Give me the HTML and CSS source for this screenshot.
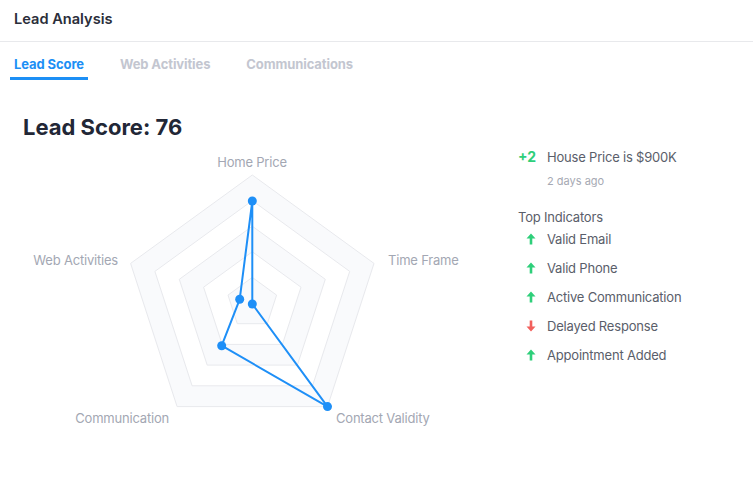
FILE: index.html
```html
<!DOCTYPE html>
<html lang="en">
<head>
	<meta charset="UTF-8">
	<title>Lead Analysis</title>
	<link rel="stylesheet" href="styles.css">
</head>
<body>
	<div class="header">Lead Analysis</div>
	<ul class="tabs">
		<li class="tab active">Lead Score</li>
		<li class="tab">Web Activities</li>
		<li class="tab">Communications</li>
	</ul>
	<h2 class="score-title">Lead Score: 76</h2>
	<div class="panel">
		<svg class="radar" width="500" height="290" viewBox="0 0 500 290">
			<!-- rings -->
			<polygon class="ring band" points="252.3,30 374,118.4 327.5,261.6 177.1,261.6 130.6,118.4"/>
			<polygon class="ring" points="252.3,55.6 349.7,126.4 312.5,240.8 192.1,240.8 154.9,126.4"/>
			<polygon class="ring band" points="252.3,81.2 325.3,134.3 297.4,220.1 207.2,220.1 179.3,134.3"/>
			<polygon class="ring" points="252.3,106.8 301,142.2 282.4,199.4 222.2,199.4 203.6,142.2"/>
			<polygon class="ring band" points="252.3,132.4 276.6,150.1 267.3,178.7 237.3,178.7 228,150.1"/>
			<!-- labels -->
			<text class="axis-label" x="252" y="22" text-anchor="middle">Home Price</text>
			<text class="axis-label" x="388" y="120">Time Frame</text>
			<text class="axis-label" x="336" y="278">Contact Validity</text>
			<text class="axis-label" x="169" y="278" text-anchor="end">Communication</text>
			<text class="axis-label" x="118" y="120" text-anchor="end">Web Activities</text>
			<!-- data -->
			<polygon class="data" points="252.3,56 252.3,159 327.5,261.6 221.7,200.7 239.7,154.3"/>
			<circle class="dot" cx="252.3" cy="56" r="4.5"/>
			<circle class="dot" cx="252.3" cy="159" r="4.5"/>
			<circle class="dot" cx="327.5" cy="261.6" r="4.5"/>
			<circle class="dot" cx="221.7" cy="200.7" r="4.5"/>
			<circle class="dot" cx="239.7" cy="154.3" r="4.5"/>
		</svg>
		<div class="side">
			<div class="event">
				<span class="delta">+2</span>
				<span>House Price is $900K</span>
			</div>
			<div class="event-time">2 days ago</div>
			<div class="side-title">Top Indicators</div>
			<ul class="indicators">
				<li><span class="ico up"><svg width="10" height="12" viewBox="0 0 10 12"><path d="M5 0.5 L9.5 5.5 L6.3 5.5 L6.3 11.5 L3.7 11.5 L3.7 5.5 L0.5 5.5 Z"/></svg></span>Valid Email</li>
				<li><span class="ico up"><svg width="10" height="12" viewBox="0 0 10 12"><path d="M5 0.5 L9.5 5.5 L6.3 5.5 L6.3 11.5 L3.7 11.5 L3.7 5.5 L0.5 5.5 Z"/></svg></span>Valid Phone</li>
				<li><span class="ico up"><svg width="10" height="12" viewBox="0 0 10 12"><path d="M5 0.5 L9.5 5.5 L6.3 5.5 L6.3 11.5 L3.7 11.5 L3.7 5.5 L0.5 5.5 Z"/></svg></span>Active Communication</li>
				<li><span class="ico down"><svg width="10" height="12" viewBox="0 0 10 12"><path d="M5 11.5 L9.5 6.5 L6.3 6.5 L6.3 0.5 L3.7 0.5 L3.7 6.5 L0.5 6.5 Z"/></svg></span>Delayed Response</li>
				<li><span class="ico up"><svg width="10" height="12" viewBox="0 0 10 12"><path d="M5 0.5 L9.5 5.5 L6.3 5.5 L6.3 11.5 L3.7 11.5 L3.7 5.5 L0.5 5.5 Z"/></svg></span>Appointment Added</li>
			</ul>
		</div>
	</div>
</body>
</html>
```

FILE: styles.css
```css
*{margin:0;padding:0;}
body{
	font-family: Inter, "Noto Sans", sans-serif;
	background: #fff;
	color: #5a5e6a;
}
.header{
	height: 41px;
	line-height: 38px;
	padding-left: 14px;
	border-bottom: 1px solid #e8e9ec;
	font-size: 14.6px;
	font-weight: 600;
	color: #2b2e3a;
}
.tabs{
	display: flex;
	gap: 28px;
	padding: 12px 0 0 10px;
	list-style: none;
}
.tab{
	padding: 0 4px 3px;
	line-height: 20px;
	font-size: 13px;
	font-weight: 700;
	letter-spacing: -0.1px;
	color: #c3c6d0;
	border-bottom: 3px solid transparent;
}
.tab.active{
	color: #1d8ff5;
	border-bottom-color: #1d8ff5;
}
.score-title{
	margin-top: 33px;
	padding-left: 23px;
	line-height: 28px;
	font-size: 22px;
	font-weight: 700;
	color: #222736;
}
.panel{
	display: flex;
	margin-top: 4px;
}
.radar{
	display: block;
	flex: none;
	margin-right: 18px;
}
.ring{
	fill: #fff;
	stroke: #e8e9ed;
	stroke-width: 1;
}
.ring.band{
	fill: #f9fafc;
}
.axis-label{
	font-size: 13px;
	letter-spacing: -0.2px;
	fill: #a3a7b3;
}
.data{
	fill: none;
	stroke: #1e8ff7;
	stroke-width: 2;
	stroke-linejoin: round;
}
.dot{
	fill: #1e8ff7;
}
.side{
	padding-top: 2px;
	font-size: 13px;
	letter-spacing: -0.2px;
}
.event{
	display: flex;
	line-height: 20px;
}
.delta{
	width: 29px;
	font-size: 14px;
	font-weight: 700;
	letter-spacing: 0;
	color: #2ecf7a;
}
.event-time{
	margin-top: 6px;
	padding-left: 29px;
	line-height: 16px;
	font-size: 11px;
	letter-spacing: 0;
	color: #a6a9b3;
}
.side-title{
	margin-top: 18px;
	line-height: 20px;
}
.indicators{
	list-style: none;
	margin-top: 2px;
	display: flex;
	flex-direction: column;
	gap: 9px;
}
.indicators li{
	display: flex;
	align-items: center;
	line-height: 20px;
}
.ico{
	display: flex;
	width: 29px;
	padding-left: 8px;
	box-sizing: border-box;
}
.ico.up svg{fill: #2ecf7a;}
.ico.down svg{fill: #f2605c;}
```
